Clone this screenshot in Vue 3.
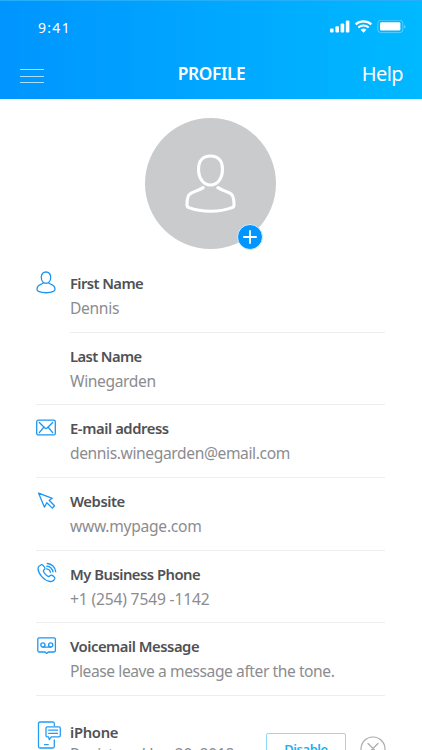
<script setup>
const rows = [
  { icon: 'user', label: 'First Name', value: 'Dennis', inset: true, labelSpacing: '-.59px', valueSpacing: '-.32px' },
  { icon: '', label: 'Last Name', value: 'Winegarden', labelSpacing: '-.62px', valueSpacing: '-.37px' },
  { icon: 'mail', label: 'E-mail address', value: 'dennis.winegarden@email.com', labelSpacing: '-.42px', valueSpacing: '-.39px' },
  { icon: 'cursor', label: 'Website', value: 'www.mypage.com', labelSpacing: '-.44px', valueSpacing: '-.27px' },
  { icon: 'phone', label: 'My Business Phone', value: '+1 (254) 7549 -1142', labelSpacing: '-.5px', valueSpacing: '-.16px' },
  { icon: 'voicemail', label: 'Voicemail Message', value: 'Please leave a message after the tone.', labelSpacing: '-.47px', valueSpacing: '-.43px' },
]
</script>

<template>
  <main class="screen">
    <header class="header">
      <div class="status">
        <span class="time">9:41</span>
        <svg class="indicators" width="78" height="16" viewBox="0 0 78 16">
          <g fill="#fff">
            <rect x="0" y="8.4" width="3.6" height="4" rx="1" />
            <rect x="5.4" y="6.2" width="3.6" height="6.2" rx="1" />
            <rect x="10.6" y="3.4" width="3.6" height="9" rx="1" />
            <rect x="15.8" y="0.6" width="3.6" height="11.8" rx="1" />
            <path d="M30.6 9.7a4.4 4.4 0 0 1 5.8 0L33.5 12.8Z" />
            <rect x="50" y="2.2" width="20.4" height="8.4" rx="1.4" />
            <path d="M74.5 4.4q1.5 2 0 4z" opacity=".7" />
          </g>
          <g fill="none" stroke="#fff" stroke-width="2.1">
            <path d="M25.6 4.4a11.8 11.8 0 0 1 15.8 0M28.3 7.5a7.8 7.8 0 0 1 10.4 0" />
          </g>
          <rect x="47.8" y="0.2" width="25" height="12.4" rx="3" fill="none" stroke="#fff" stroke-width=".8" opacity=".4" />
        </svg>
      </div>
      <nav class="nav">
        <button class="menu" aria-label="Menu"><i></i><i></i><i></i></button>
        <h1>PROFILE</h1>
        <a class="help">Help</a>
      </nav>
    </header>

    <section class="avatar-area">
      <div class="avatar">
        <svg width="51" height="59" viewBox="0 0 52 60" fill="none" stroke="#fff" stroke-width="3.2" stroke-linecap="round" stroke-linejoin="round">
          <path d="M26 2C18 2 13.8 7.2 13.8 15.500C13.8 25 19 31.500 26 31.500S38.2 25 38.2 15.500C38.2 7.2 34 2 26 2Z" />
          <path d="M18.500 34.2C14 37.500 8.500 38 5 40.700C2.500 42.500 2 46 2 52.500Q2 53.8 4 54.600C17 59.500 35 59.500 48 54.600Q50 53.8 50 52.500C50 46 49.500 42.500 47 40.700C43.500 38 38 37.500 33.500 34.2" />
        </svg>
        <button class="add" aria-label="Add photo">
          <svg width="14" height="14" viewBox="0 0 14 14" stroke="#fff" stroke-width="1.8" stroke-linecap="round"><path d="M7 .9v12.2M.9 7h12.2" /></svg>
        </button>
      </div>
    </section>

    <section class="fields">
      <article v-for="row in rows" :key="row.label" class="row" :class="{ inset: row.inset }">
        <div class="icon">
          <svg v-if="row.icon === 'user'" width="20" height="23" viewBox="0 0 20 23">
            <path d="M10 1C6.9 1 5.3 3.2 5.3 6.3C5.3 9.8 7.3 12.3 10 12.3S14.7 9.8 14.7 6.3C14.7 3.2 13.1 1 10 1ZM7 12.3C4.5 14 1 13.8 1 18.3Q1 19.6 2.4 20.3C6.5 22.2 13.5 22.2 17.6 20.3Q19 19.6 19 18.3C19 13.8 15.5 14 13 12.3" />
          </svg>
          <svg v-else-if="row.icon === 'mail'" width="20" height="23" viewBox="0 0 20 23">
            <rect x=".7" y="4.200" width="18.6" height="14.700" rx="1.5" />
            <path d="M3.3 6.500L9 12Q10 12.900 11 12L16.700 6.500M3.300 16.700L7.600 11.500M16.700 16.700L12.400 11.500" />
          </svg>
          <svg v-else-if="row.icon === 'cursor'" class="shift" width="20" height="23" viewBox="0 0 20 23">
            <path d="M1.6 4.2L15.3 9.3L12.2 11.2L17.5 16.7L15.3 19.1L9.8 13.8L7.4 18.1Z" />
          </svg>
          <svg v-else-if="row.icon === 'phone'" class="shift" width="20" height="23" viewBox="0 0 20 23">
            <path d="M3 3.5L4.4 2.7C5.5 2.2 7.6 5.2 7.9 6.1C8.2 7.5 6.1 7.9 6.4 9.1C7 11.2 9.6 14 11.5 14.5C12.7 14.8 13.3 12.8 14.6 13.1C15.6 13.4 18.3 15.2 17.9 16.4C17.1 18.6 15.4 19.8 13.2 19.5C7.3 18.7 1.2 12.2 1 6.6C1 5.2 1.7 4.2 3 3.5ZM10.3 1.5C14.7 1.7 18.4 5.2 18.7 9.7M9.8 4.2C13 4.3 15.7 6.8 16 9.9M9.6 6.8C11.6 7 13.1 8.3 13.4 10.2" />
          </svg>
          <svg v-else-if="row.icon === 'voicemail'" class="shift" width="20" height="23" viewBox="0 0 20 23">
            <path d="M2.2 3.8H17Q18.4 3.8 18.4 5.2V16.6Q18.4 18 17 18H11.3L9.7 19.4L8.1 18H2.2Q.8 18 .8 16.600V5.2Q.8 3.8 2.2 3.8ZM5.9 13.100H13.700" />
            <circle cx="5.9" cy="11" r="2.1" /><circle cx="13.7" cy="11" r="2.1" />
          </svg>
        </div>
        <div class="copy">
          <h2 :style="{ letterSpacing: row.labelSpacing }">{{ row.label }}</h2>
          <p :style="{ letterSpacing: row.valueSpacing }">{{ row.value }}</p>
        </div>
      </article>
    </section>

    <section class="device">
      <svg class="device-icon" width="25" height="29" viewBox="0 0 25 29">
        <path d="M17.3 4.5V2.5Q17.3 1 15.8 1H3Q1.5 1 1.5 2.5V25.5Q1.5 27 3 27H15.8Q17.3 27 17.3 25.5V19M7.5 23.6H11.3" />
        <path d="M10.3 5.9H22Q23.3 5.9 23.3 7.2V14.5Q23.3 15.8 22 15.8H14.3L12.3 18.6L11.5 15.8H10.3Q9 15.8 9 14.5V7.2Q9 5.9 10.3 5.9ZM11.7 9.2H20.6M11.7 12.3H20.6" />
      </svg>
      <div class="copy">
        <h2 class="device-name">iPhone</h2>
        <p class="registered">Registered Jan 20, 2018</p>
      </div>
      <button class="disable">Disable</button>
      <svg class="remove" width="26" height="26" viewBox="0 0 26 26"><circle cx="13" cy="13" r="12" /><path d="M8 7.500l10 10M18 7.500L8 17.500" /></svg>
    </section>
  </main>
</template>

<style>
body { overflow: hidden; }
</style>

<style scoped>
* { box-sizing: border-box; }
.screen {
  width: 422px;
  height: 750px;
  overflow: hidden;
  background: #fff;
  font-family: "Noto Sans", sans-serif;
}
h1, h2, p { margin: 0; }
button { margin: 0; padding: 0; border: 0; background: none; font-family: inherit; }
svg { display: block; }
.header {
  height: 99px;
  background: linear-gradient(90deg, #0095ff, #00b9ff);
  border-top: 1px solid #25aefa;
  color: #fff;
}
.status {
  display: flex;
  justify-content: space-between;
  padding: 17px 14px 0 38px;
  height: 48px;
}
.time { font-size: 14px; line-height: 20px; letter-spacing: 1.3px; }
.indicators { margin-top: 2px; }
.nav {
  display: grid;
  grid-template-columns: 1fr auto 1fr;
  align-items: center;
  height: 50px;
  padding: 0 19px 0 20px;
}
.menu { display: flex; flex-direction: column; gap: 5.5px; width: 24px; margin-top: 4px; }
.menu i { height: 1px; background: #a5e0ff; }
h1 { font-size: 17.3px; font-weight: 600; line-height: 24px; letter-spacing: -.4px; }
.help { justify-self: end; font-size: 20px; line-height: 28px; letter-spacing: -.55px; }
.avatar-area { display: flex; justify-content: center; height: 161px; padding: 19px 1px 0 0; }
.avatar {
  position: relative;
  display: flex;
  justify-content: center;
  width: 131px;
  height: 131px;
  padding-top: 36px;
  border-radius: 50%;
  background: #cacbcd;
}
.add {
  position: absolute;
  right: 13px;
  bottom: -1px;
  display: grid;
  place-items: center;
  width: 26px;
  height: 26px;
  border: 1px solid #d9efff;
  border-radius: 50%;
  background: #0095ff;
}
.row {
  display: flex;
  height: 72.67px;
  margin: 0 37px 0 36px;
  padding-top: 11px;
  border-bottom: 1px solid #eee;
}
.row.inset { border-bottom: 0; background: linear-gradient(#eee, #eee) 34px 100% / 100% 1px no-repeat; }
.icon { width: 34px; }
.icon svg { fill: none; stroke: #1c96f2; stroke-width: 1.3; stroke-linecap: round; stroke-linejoin: round; }
.icon .shift { margin-left: 1px; }
h2 { color: #505154; font-size: 14.8px; font-weight: 600; line-height: 24px; white-space: nowrap; }
.copy p { margin-top: 1px; color: #8b8c8f; font-size: 15.6px; line-height: 24px; white-space: nowrap; }
.device {
  display: flex;
  align-items: flex-start;
  padding: 24px 36px 0 37px;
}
.device-icon { flex: none; margin-right: 8px; margin-top: 1px; fill: none; stroke: #229cf4; stroke-width: 1.3; stroke-linecap: round; stroke-linejoin: round; }
.device .copy { width: 196px; }
.device-name { letter-spacing: -.3px; }
.device .registered { margin-top: -2px; letter-spacing: -.3px; }
.disable {
  width: 80px;
  height: 32px;
  margin-top: 13px;
  border: 1px solid #91daf7;
  border-radius: 2px;
  color: #1daff2;
  font-size: 13px;
  font-weight: 600;
  letter-spacing: -.45px;
}
.remove { flex: none; margin: 16px 0 0 14px; fill: none; stroke: #aaa; stroke-width: 1.2; stroke-linecap: round; }
</style>
